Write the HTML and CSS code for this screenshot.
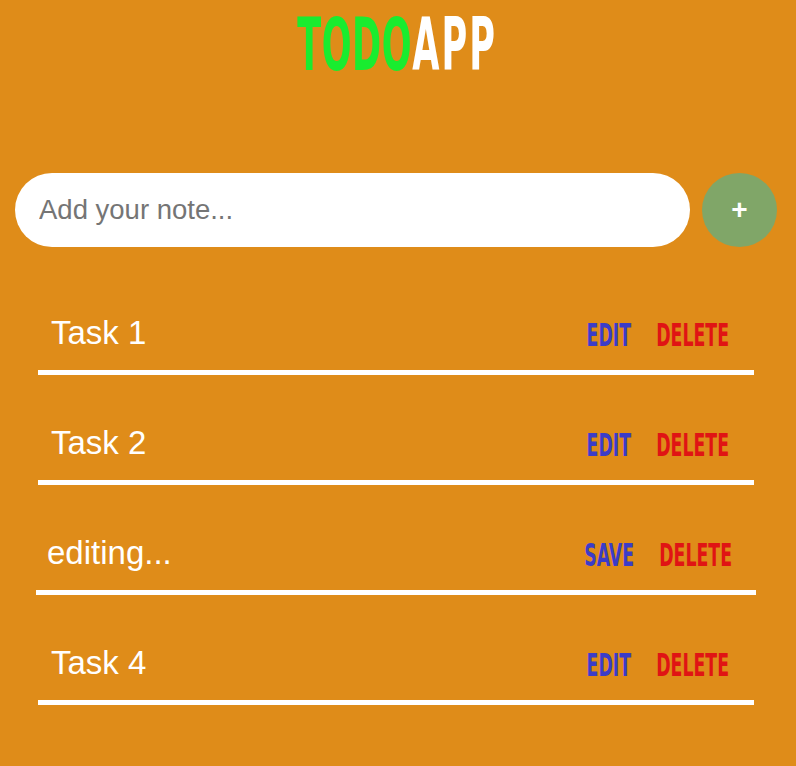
FILE: index.html
```html
<!DOCTYPE html>
<html lang="en">
<head>
<meta charset="utf-8">
<title>TodoApp</title>
<link rel="stylesheet" href="styles.css">
</head>
<body>
<header class="header">
  <h1 class="title"><span class="title-todo">TODO</span><span class="title-app">APP</span></h1>
</header>
<form class="add-form">
  <input class="add-input" type="text" placeholder="Add your note...">
  <button class="add-btn" type="button">+</button>
</form>
<ul class="list">
  <li class="item">
    <span class="item-text">Task 1</span>
    <span class="actions"><span class="act act-edit">EDIT</span><span class="act act-delete">DELETE</span></span>
  </li>
  <li class="item">
    <span class="item-text">Task 2</span>
    <span class="actions"><span class="act act-edit">EDIT</span><span class="act act-delete">DELETE</span></span>
  </li>
  <li class="item item-editing">
    <span class="item-text">editing...</span>
    <span class="actions"><span class="act act-edit">SAVE</span><span class="act act-delete">DELETE</span></span>
  </li>
  <li class="item">
    <span class="item-text">Task 4</span>
    <span class="actions"><span class="act act-edit">EDIT</span><span class="act act-delete">DELETE</span></span>
  </li>
</ul>
</body>
</html>
```

FILE: styles.css
```css
html, body {
  margin: 0;
  padding: 0;
}
body {
  background: #df8c19;
  font-family: "Liberation Sans", Arial, sans-serif;
  min-height: 766px;
}
.header {
  display: flex;
  justify-content: center;
  padding-top: 26px;
}
.title {
  margin: 0 0 0 -2px;
  display: flex;
  font-family: "DejaVu Sans Condensed", "DejaVu Sans", sans-serif;
  font-weight: bold;
  font-size: 39px;
  line-height: 40px;
  letter-spacing: 0.6px;
}
.title-todo, .title-app {
  display: inline-block;
  transform: scaleY(1.88);
}
.title-todo { color: #19ec2f; }
.title-app { color: #ffffff; letter-spacing: 2px; }

.add-form {
  display: flex;
  gap: 12px;
  margin: 107px 19px 0 15px;
}
.add-input {
  flex: 1;
  height: 74px;
  box-sizing: border-box;
  border: none;
  border-radius: 37px;
  padding: 0 24px;
  font-family: "Liberation Sans", Arial, sans-serif;
  font-size: 27.5px;
  background: #fff;
  outline: none;
}
.add-input::placeholder { color: #757575; }
.add-btn {
  width: 75px;
  height: 74px;
  border: none;
  border-radius: 50%;
  background: #80a668;
  color: #fff;
  font-family: "Liberation Sans", Arial, sans-serif;
  font-weight: bold;
  font-size: 28px;
  padding: 0;
}

.list {
  list-style: none;
  margin: 18px 42px 0 38px;
  padding: 0;
}
.item {
  display: flex;
  align-items: center;
  justify-content: space-between;
  padding: 49px 25px 19px 13px;
  border-bottom: 5px solid #fff;
}
.item-editing {
  margin: 0 -2px;
  padding-left: 11px;
  padding-right: 24px;
}
.item-text {
  color: #fff;
  font-size: 33px;
  line-height: 37px;
}
.actions {
  display: flex;
  gap: 25px;
}
.act {
  display: inline-block;
  font-family: "DejaVu Sans Condensed", "DejaVu Sans", sans-serif;
  font-weight: bold;
  font-size: 19.3px;
  transform: translateY(2px) scaleY(1.7);
}
.act-edit { color: #3c3cc8; }
.act-delete { color: #e01414; }
```
